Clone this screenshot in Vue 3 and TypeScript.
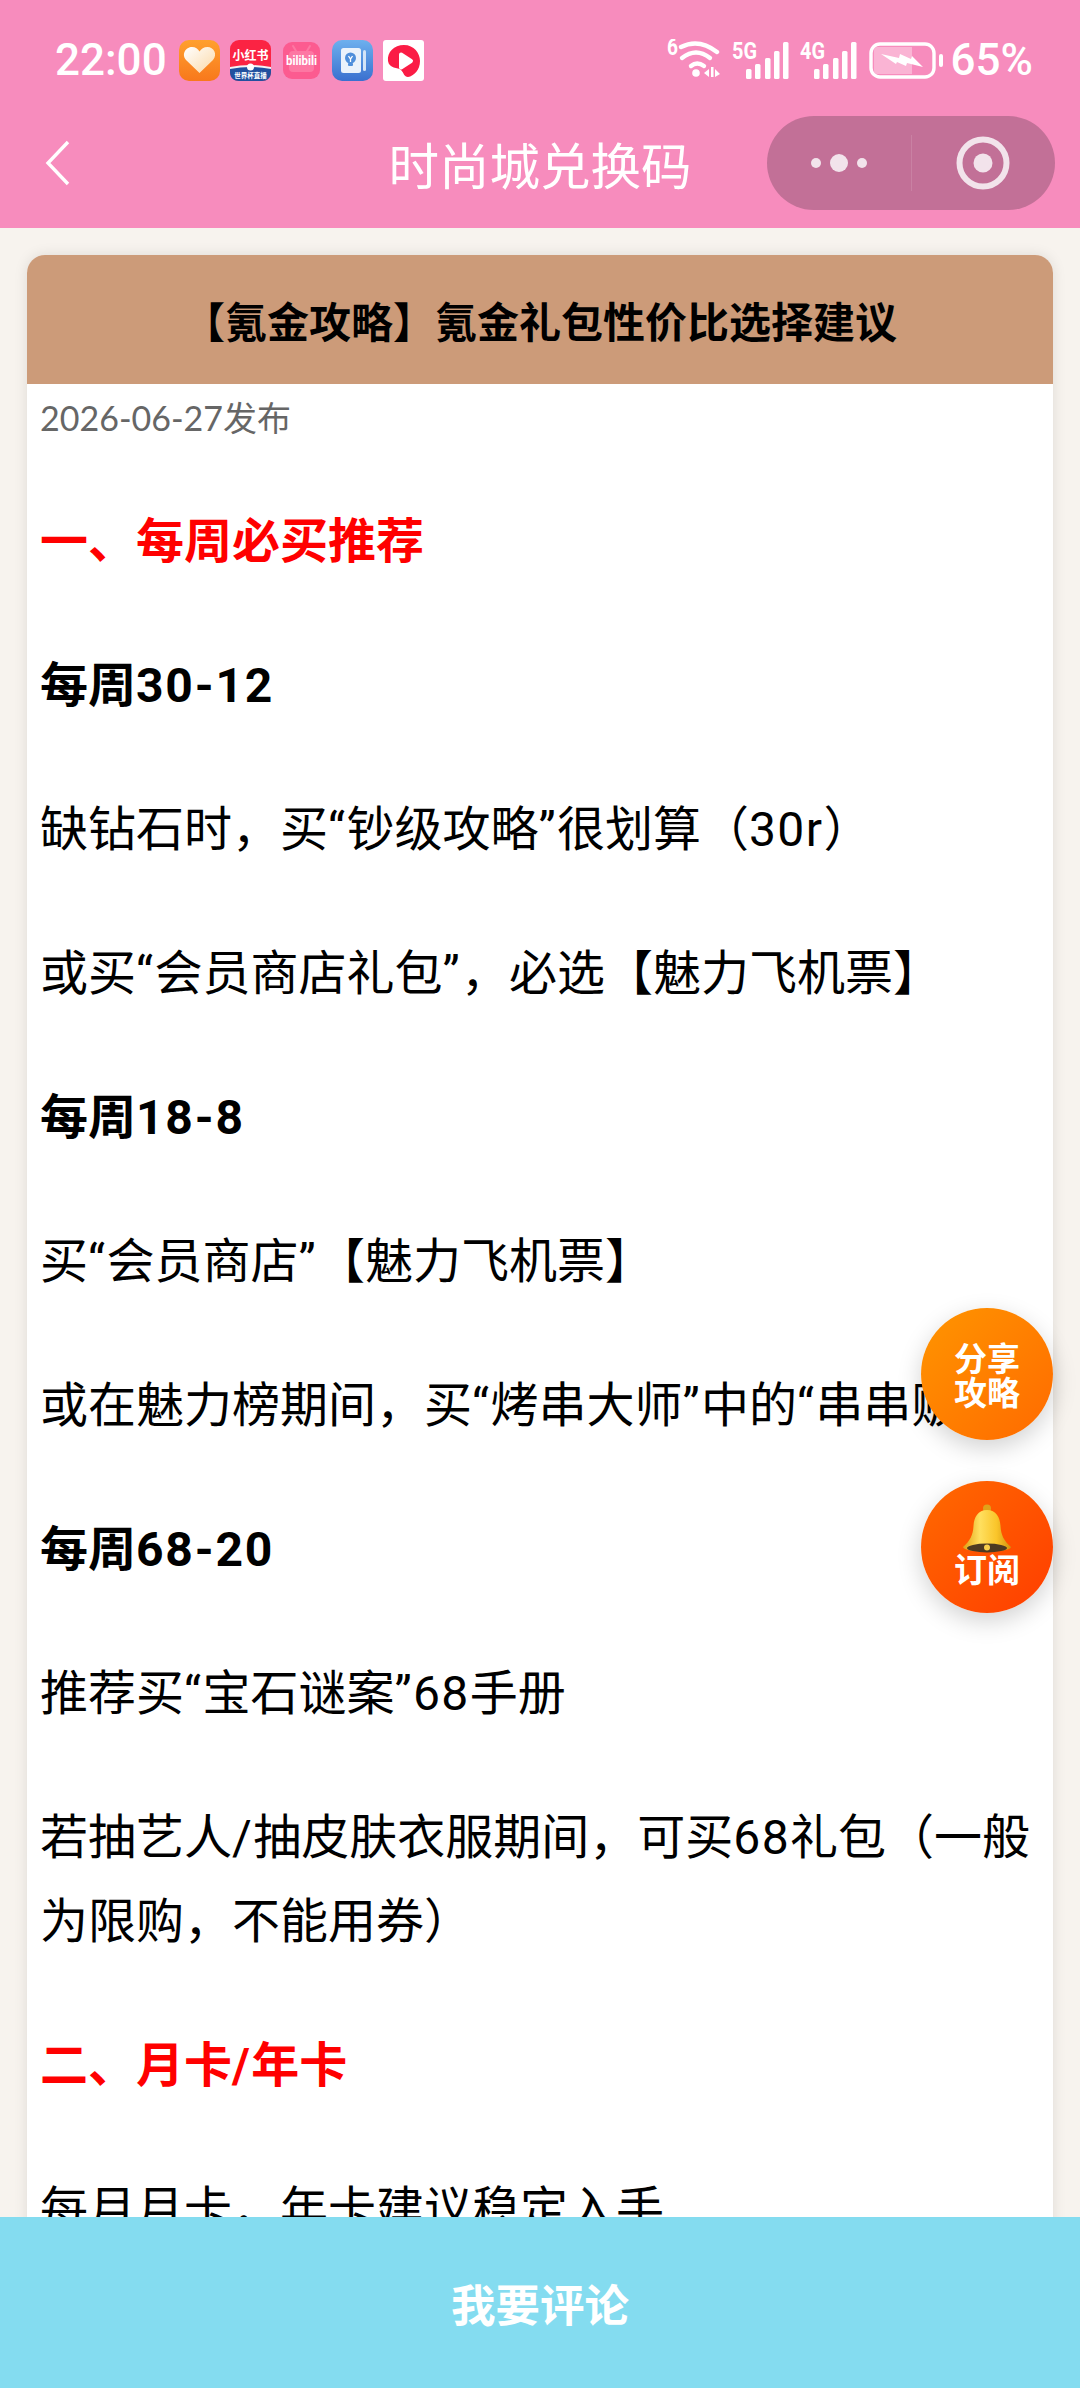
<script setup lang="ts">
type Line = { text: string; kind?: 'red' | 'bold' }

const lines: Line[] = [
  { text: '一、每周必买推荐', kind: 'red' },
  { text: '每周30-12', kind: 'bold' },
  { text: '缺钻石时，买“钞级攻略”很划算（30r）' },
  { text: '或买“会员商店礼包”，必选【魅力飞机票】' },
  { text: '每周18-8', kind: 'bold' },
  { text: '买“会员商店”【魅力飞机票】' },
  { text: '或在魅力榜期间，买“烤串大师”中的“串串贩”' },
  { text: '每周68-20', kind: 'bold' },
  { text: '推荐买“宝石谜案”68手册' },
  { text: '若抽艺人/抽皮肤衣服期间，可买68礼包（一般为限购，不能用券）' },
  { text: '二、月卡/年卡', kind: 'red' },
  { text: '每月月卡，年卡建议稳定入手' },
]

// latin runs get a little tracking, the reference's numerals are wider than Roboto's
const latinRun = /^[0-9A-Za-z“”/-]+$/
const splitRuns = (text: string) => text.split(/([0-9A-Za-z“”/-]+)/).filter(Boolean)

const signals = ['5G', '4G']
const bars = [
  { x: 14, top: 29 },
  { x: 23, top: 24 },
  { x: 33, top: 18 },
  { x: 42, top: 11 },
  { x: 51, top: 2 },
]
</script>

<template>
  <div class="page">
    <header class="top">
      <div class="status">
        <span class="time">22:00</span>
        <div class="apps">
          <svg class="app" viewBox="0 0 41 41">
            <defs>
              <linearGradient id="heartBg" x1="0" y1="0" x2="0" y2="1">
                <stop offset="0" stop-color="#ffa02e" />
                <stop offset="1" stop-color="#f8781c" />
              </linearGradient>
              <linearGradient id="heartFill" x1="0" y1="0" x2="1" y2="1">
                <stop offset="0" stop-color="#fff" />
                <stop offset="1" stop-color="#fbd8a6" />
              </linearGradient>
            </defs>
            <rect width="41" height="41" rx="10" fill="url(#heartBg)" />
            <path d="M20.5 33 L7 20 C2 14 7 7 13 7 C16.5 7 19 9 20.5 11.5 C22 9 25 7 28.5 7 C34.5 7 39 14 34 20 Z" fill="url(#heartFill)" />
          </svg>
          <svg class="app" viewBox="0 0 41 41">
            <rect width="41" height="41" rx="9" fill="#fb2343" />
            <path d="M0 28 Q20.5 24 41 28 V32 C41 38 37 41 32 41 H9 C4 41 0 38 0 32 Z" fill="#22509f" />
            <path d="M0 27 Q20.5 23 41 27 V29 Q20.5 25 0 29 Z" fill="#f3f3f5" />
            <circle cx="20.5" cy="27" r="3.5" fill="#fff" />
            <text x="20.5" y="20" class="xhs">小红书</text>
            <text x="20.5" y="38" class="xhs-sub">世界杯直播</text>
          </svg>
          <svg class="app app--small" viewBox="0 0 37 37">
            <rect width="37" height="37" rx="9" fill="#fc5b90" />
            <rect x="6" y="9" width="25" height="21" rx="4" fill="#fd77a3" />
            <path d="M13 9 L10 4 M24 9 L27 4" stroke="#fd77a3" stroke-width="2" stroke-linecap="round" />
            <text x="18.5" y="23" class="bili" textLength="31" lengthAdjust="spacingAndGlyphs">bilibili</text>
          </svg>
          <svg class="app" viewBox="0 0 41 41">
            <defs>
              <linearGradient id="noteBg" x1="0" y1="0" x2="0" y2="1">
                <stop offset="0" stop-color="#6db0ee" />
                <stop offset="1" stop-color="#3a70cf" />
              </linearGradient>
            </defs>
            <rect width="41" height="41" rx="10" fill="url(#noteBg)" />
            <rect x="9" y="8" width="20" height="25" rx="2.5" fill="#eaf2fb" />
            <rect x="31" y="10" width="3" height="21" rx="1.5" fill="#d4e4f7" />
            <circle cx="18.5" cy="18" r="5.5" fill="#4f8fdb" />
            <rect x="16" y="23" width="5" height="3" rx="1" fill="#4f8fdb" />
            <path d="M16.5 16 L18.5 19 L20.5 16 M18.5 19 V22" stroke="#fff" stroke-width="1.3" fill="none" />
          </svg>
          <svg class="app" viewBox="0 0 41 41">
            <rect width="41" height="41" rx="3" fill="#fff" />
            <path d="M21 5 C31 5 37 13 37 21 C37 30 31 36 25 37 C21 37 21 33 18 30 C15 27 6 29 5 21 C4 12 11 5 21 5 Z" fill="#fb1c45" />
            <path d="M18 14.5 L28 21 L18 27.5 Z" fill="#fff" stroke="#fff" stroke-width="4" stroke-linejoin="round" />
          </svg>
        </div>
        <div class="sys">
          <svg class="wifi" viewBox="0 0 60 42">
            <text x="0" y="16" class="net" textLength="11" lengthAdjust="spacingAndGlyphs">6</text>
            <g fill="none" stroke="#fff" stroke-width="4.4" stroke-linecap="round">
              <path d="M14 8 Q32 -1 50 13" />
              <path d="M15 19 Q29 8 43 19" />
              <path d="M24 27 Q30 22 37 27" />
            </g>
            <circle cx="29" cy="34" r="3.8" fill="#fff" />
            <path d="M37 34 L42 30 V38 Z M44 28 H46.5 V38 H44 Z M48 30 L53 35 L48 38 Z" fill="#fff" />
          </svg>
          <svg v-for="label in signals" :key="label" class="signal" viewBox="0 0 60 40">
            <text x="0" y="19" class="net" textLength="25" lengthAdjust="spacingAndGlyphs">{{ label }}</text>
            <rect v-for="bar in bars" :key="bar.x" :x="bar.x" :y="bar.top" width="5.5" :height="39 - bar.top" rx="1.5" fill="#fff" />
          </svg>
          <svg class="battery" viewBox="0 0 74 37">
            <rect x="2" y="2" width="63" height="33" rx="9" fill="none" stroke="#fff" stroke-width="3.4" />
            <path d="M5 9 C5 6 6 5 9 5 H43 V32 H9 C6 32 5 31 5 28 Z" fill="#fff" fill-opacity=".35" />
            <path d="M12 12 L30 16 L31 12 L42 17 L43 14 L54 25 L38 21 L37 24 L28 20 L27 22 Z" fill="#fff" />
            <rect x="70" y="12" width="4" height="13" rx="2" fill="#fff" />
          </svg>
          <span class="percent">65%</span>
        </div>
      </div>
      <nav class="nav">
        <svg class="back" viewBox="0 0 26 46">
          <path d="M23 2 L3 23 L23 44" fill="none" stroke="#fff" stroke-width="3.4" />
        </svg>
        <h1 class="nav-title">时尚城兑换码</h1>
        <div class="capsule">
          <div class="capsule-part">
            <svg class="dots" viewBox="0 0 56 20">
              <circle cx="5" cy="10" r="5" />
              <circle cx="28" cy="10" r="9" />
              <circle cx="51" cy="10" r="5" />
            </svg>
          </div>
          <div class="capsule-part capsule-part--right">
            <svg class="target" viewBox="0 0 54 54">
              <circle cx="27" cy="27" r="23.5" fill="none" stroke="#f2e3eb" stroke-width="6" />
              <circle cx="27" cy="27" r="9.5" fill="#f2e3eb" />
            </svg>
          </div>
        </div>
      </nav>
    </header>

    <main class="content">
      <article class="card">
        <h2 class="card-title">【氪金攻略】氪金礼包性价比选择建议</h2>
        <div class="card-body">
          <div class="date">2026-06-27发布</div>
          <p
            v-for="line in lines"
            :key="line.text"
            class="line"
            :class="line.kind ? `line--${line.kind}` : ''"
          ><span
            v-for="(run, i) in splitRuns(line.text)"
            :key="i"
            :class="{ latin: latinRun.test(run) }"
          >{{ run }}</span></p>
        </div>
      </article>
    </main>

    <footer class="comment">我要评论</footer>

    <button class="fab fab--share">分享<br>攻略</button>
    <button class="fab fab--sub">
      <svg class="bell" viewBox="2 0 48 50">
        <defs>
          <linearGradient id="bellGold" x1="0" y1="0" x2="1" y2="0">
            <stop offset="0" stop-color="#e0a015" />
            <stop offset=".35" stop-color="#ffe060" />
            <stop offset=".7" stop-color="#fac52a" />
            <stop offset="1" stop-color="#d0920f" />
          </linearGradient>
        </defs>
        <circle cx="26" cy="4.5" r="4" fill="#e0a21a" />
        <path d="M26 6 C17 6 13 13 12.5 22 C12 31 9 37 2 43 C2 49 50 49 50 43 C43 37 40 31 39.5 22 C39 13 35 6 26 6 Z" fill="url(#bellGold)" />
        <ellipse cx="26" cy="44" rx="20" ry="4.4" fill="#4d3a22" />
        <circle cx="26" cy="43.5" r="3" fill="#f7cf4a" />
      </svg>
      <span class="sub-label">订阅</span>
    </button>
  </div>
</template>

<style>
html,
body {
  margin: 0;
  background: #f7f3ee;
}
</style>

<style scoped>
.page {
  position: relative;
  display: flex;
  flex-direction: column;
  width: 1080px;
  height: 2388px;
  overflow: hidden;
  background: #f7f3ee;
  font-family: Roboto, "Noto Sans CJK SC", sans-serif;
  color: #000;
  text-spacing-trim: space-all;
}

.top {
  flex: none;
  height: 228px;
  background: #f78cbd;
  color: #fff;
}

.status {
  display: flex;
  align-items: center;
  height: 112px;
  padding: 4px 47px 0 55px;
}

.time {
  font-size: 44px;
  font-weight: 500;
  line-height: 1;
}

.apps {
  display: flex;
  align-items: center;
  gap: 10px;
  margin-left: 12px;
}

.app {
  display: block;
  width: 41px;
  height: 41px;
}

.app--small {
  width: 37px;
  height: 37px;
  margin: 0 2px;
}

.xhs {
  font-size: 12px;
  font-weight: 700;
  fill: #fff;
  text-anchor: middle;
  font-family: "Noto Sans CJK SC", sans-serif;
}

.xhs-sub {
  font-size: 6.5px;
  font-weight: 700;
  fill: #fff;
  text-anchor: middle;
  font-family: "Noto Sans CJK SC", sans-serif;
}

.bili {
  font-size: 13px;
  font-weight: 700;
  fill: #fff;
  text-anchor: middle;
}

.sys {
  display: flex;
  align-items: center;
  margin-left: auto;
}

.wifi {
  display: block;
  width: 60px;
  height: 42px;
  margin-right: 5px;
}

.signal {
  display: block;
  width: 60px;
  height: 40px;
  margin-right: 8px;
}

.net {
  font-size: 24px;
  font-weight: 700;
  fill: #fff;
}

.battery {
  display: block;
  width: 74px;
  height: 37px;
  margin-left: 1px;
}

.percent {
  margin-left: 8px;
  font-size: 44px;
  font-weight: 500;
  line-height: 1;
}

.nav {
  display: grid;
  grid-template-columns: 1fr auto 1fr;
  align-items: center;
  height: 94px;
  padding: 0 25px;
}

.back {
  display: block;
  width: 26px;
  height: 46px;
  margin-left: 20px;
}

.nav-title {
  margin: 0;
  font-size: 50.5px;
  font-weight: 400;
  line-height: 1;
  font-family: "Noto Sans CJK SC", sans-serif;
}

.capsule {
  display: flex;
  justify-self: end;
  width: 288px;
  height: 94px;
  border-radius: 47px;
  background: #c27097;
}

.capsule-part {
  display: flex;
  flex: 1;
  align-items: center;
  justify-content: center;
}

.capsule-part--right {
  position: relative;
}

.capsule-part--right::before {
  content: "";
  position: absolute;
  left: 0;
  top: 19px;
  bottom: 19px;
  width: 1px;
  background: rgba(255, 255, 255, 0.12);
}

.dots {
  display: block;
  width: 56px;
  height: 20px;
  fill: #f2e3eb;
}

.target {
  display: block;
  width: 54px;
  height: 54px;
}

.content {
  flex: 1;
  min-height: 0;
  overflow: hidden;
  padding: 27px 27px 0;
}

.card {
  border-radius: 18px;
  background: #fff;
  box-shadow: 0 0 14px rgba(0, 0, 0, 0.1);
  overflow: hidden;
}

.card-title {
  margin: 0;
  height: 129px;
  background: #cc9b79;
  font-size: 42px;
  font-weight: 700;
  line-height: 129px;
  text-align: center;
  font-family: "Noto Sans CJK SC", sans-serif;
}

.card-body {
  padding: 12px 13px 60px;
}

.date {
  font-family: Lato, "Noto Sans CJK SC", sans-serif;
  font-size: 34px;
  line-height: 44px;
  color: #666;
}

.line {
  margin: 60px 0 0;
  font-size: 48px;
  line-height: 84px;
}

.latin {
  letter-spacing: 1.4px;
}

.line--bold {
  font-weight: 700;
}

.line--bold .latin {
  letter-spacing: 1.8px;
}

.line--red {
  font-weight: 700;
  color: #f00;
}

.comment {
  flex: none;
  height: 171px;
  background: #84dcf0;
  color: #fff;
  font-size: 44.5px;
  font-weight: 700;
  line-height: 171px;
  text-align: center;
  font-family: "Noto Sans CJK SC", sans-serif;
}

.fab {
  position: absolute;
  left: 921px;
  display: flex;
  flex-direction: column;
  align-items: center;
  justify-content: center;
  width: 132px;
  height: 132px;
  padding: 0;
  border: 0;
  border-radius: 50%;
  box-shadow: 0 8px 24px rgba(0, 0, 0, 0.18);
  color: #fff;
  font-family: "Noto Sans CJK SC", sans-serif;
  font-size: 33px;
  font-weight: 700;
  line-height: 34px;
}

.fab--share {
  top: 1308px;
  display: block;
  background: linear-gradient(135deg, #ff9500, #ff6a00);
}

.fab--sub {
  top: 1481px;
  justify-content: flex-start;
  padding-top: 23px;
  background: linear-gradient(135deg, #ff6a00, #ff3d00);
}

.bell {
  display: block;
  width: 50px;
  height: 50px;
}

.sub-label {
  display: block;
  margin-top: -3px;
}
</style>
